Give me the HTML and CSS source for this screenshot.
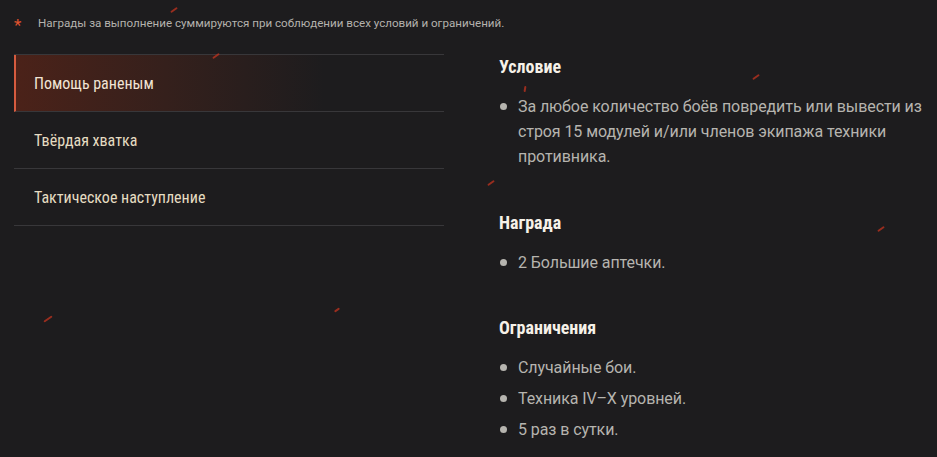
FILE: index.html
```html
<!DOCTYPE html>
<html lang="ru">
<head>
<meta charset="utf-8">
<link rel="stylesheet" href="styles.css">
</head>
<body>
<div class="page">
  <p class="note"><span class="star">*</span><span>Награды за выполнение суммируются при соблюдении всех условий и ограничений.</span></p>
  <div class="cols">
    <ul class="menu">
      <li class="item active">Помощь раненым</li>
      <li class="item">Твёрдая хватка</li>
      <li class="item">Тактическое наступление</li>
    </ul>
    <div class="details">
      <section class="block">
        <h3 class="title">Условие</h3>
        <ul class="list">
          <li>За любое количество боёв повредить или вывести из строя 15 модулей и/или членов экипажа техники противника.</li>
        </ul>
      </section>
      <section class="block">
        <h3 class="title">Награда</h3>
        <ul class="list">
          <li>2 Большие аптечки.</li>
        </ul>
      </section>
      <section class="block">
        <h3 class="title">Ограничения</h3>
        <ul class="list spaced">
          <li>Случайные бои.</li>
          <li>Техника IV–X уровней.</li>
          <li>5 раз в сутки.</li>
        </ul>
      </section>
    </div>
  </div>
  <i class="spark s1"></i><i class="spark s2"></i><i class="spark s3"></i><i class="spark s4"></i><i class="spark s5"></i><i class="spark s6"></i><i class="spark s7"></i><i class="spark s8"></i>
</div>
</body>
</html>
```
FILE: styles.css
```css
* { box-sizing: border-box; }
html, body { margin: 0; padding: 0; overflow: hidden; }
body {
  background: #1d1c1e;
  width: 937px;
  height: 457px;
  font-family: Roboto, "Noto Sans", sans-serif;
}
.page { position: relative; padding: 0 0 0 14px; width: 937px; height: 457px; overflow: hidden; }
.note {
  margin: 0;
  padding-top: 15px;
  height: 54px;
  display: flex;
  align-items: flex-start;
  font-size: 11.6px;
  line-height: 16px;
  color: #b4b2ad;
}
.star {
  color: #e0532e;
  font-size: 17px;
  line-height: 16px;
  width: 24px;
  padding-top: 2px;
}
.cols { display: flex; }
.menu {
  flex: none;
  list-style: none;
  margin: 0;
  padding: 0;
  width: 430px;
  border-top: 1px solid #38373a;
}
.item {
  height: 57px;
  display: flex;
  align-items: center;
  padding-left: 20px;
  border-bottom: 1px solid #38373a;
  font-family: "Roboto Condensed", "DejaVu Sans Condensed", Roboto, sans-serif;
  font-size: 16px;
  color: #e6dcc2;
}
.item.active {
  border-left: 2px solid #d65b3f;
  padding-left: 18px;
  background: linear-gradient(90deg, #4b2219 0%, #35201c 35%, #1d1c1e 72%);
  color: #f1e4d4;
}
.details { flex: none; width: 438px; margin-left: 55px; padding-top: 2px; }
.block { margin-bottom: 43px; }
.block:nth-child(2) { margin-bottom: 42px; }
.block:last-child { margin-bottom: 0; }
.title {
  margin: 0 0 16px;
  font-family: "Roboto Condensed", "DejaVu Sans Condensed", Roboto, sans-serif;
  font-weight: 700;
  font-size: 18px;
  line-height: 22px;
  color: #f6f1e8;
}
.list {
  list-style: none;
  margin: 0;
  padding: 0;
  font-size: 16px;
  letter-spacing: -0.08px;
  line-height: 25px;
  color: #b6b4af;
}
.list li { position: relative; padding-left: 19px; }
.list li::before {
  content: "";
  position: absolute;
  left: 1px;
  top: 9px;
  width: 7px;
  height: 7px;
  border-radius: 50%;
  background: #b6b4af;
}
.list.spaced li { margin-bottom: 6px; }
.list.spaced li:last-child { margin-bottom: 0; }
.spark {
  position: absolute;
  width: 8px;
  height: 2px;
  background: #b8321f;
  border-radius: 1px;
  transform: rotate(-35deg);
  opacity: .8;
}
.s1 { left: 170px; top: 9px; }
.s2 { left: 212px; top: 55px; }
.s3 { left: 752px; top: 76px; }
.s4 { left: 522px; top: 88px; width: 6px; transform: rotate(-80deg); }
.s5 { left: 487px; top: 182px; }
.s6 { left: 877px; top: 228px; }
.s7 { left: 43px; top: 318px; width: 10px; }
.s8 { left: 334px; top: 309px; width: 6px; }
```
